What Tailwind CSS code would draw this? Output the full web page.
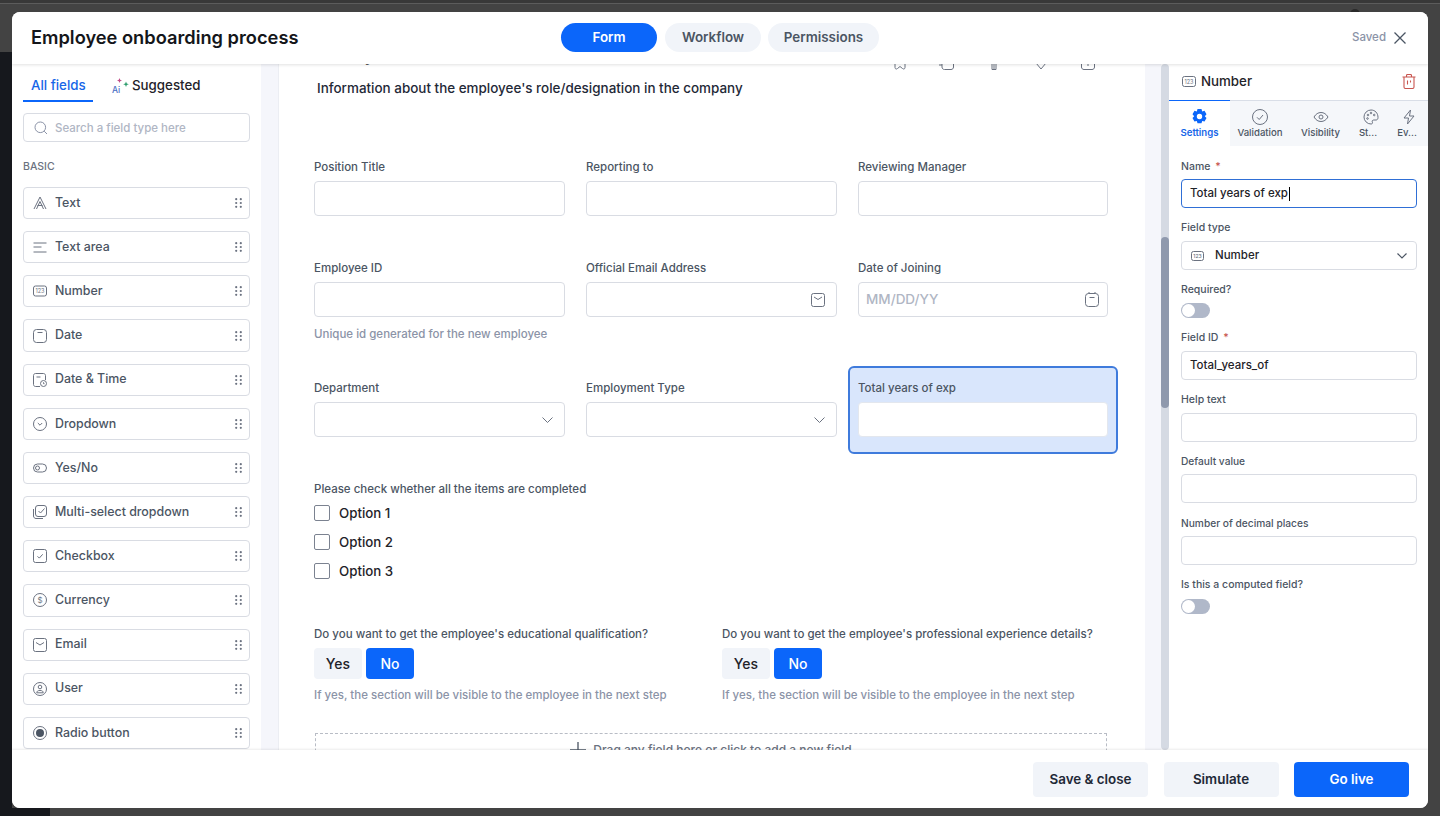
<!DOCTYPE html>
<html lang="en">
<head>
  <meta charset="UTF-8">
  <meta name="viewport" content="width=device-width, initial-scale=1.0">
  <title>Employee onboarding process</title>
  <script src="https://cdn.jsdelivr.net/npm/@tailwindcss/browser@4"></script>
</head>
<body class="relative h-[816px] w-[1440px] overflow-hidden bg-[#434343] p-3 font-['Inter',sans-serif] text-[#1f2329]">
  <!-- page behind the modal -->
  <div class="absolute left-0 right-0 top-0 h-[4px] border-b border-[#5c5c5c] bg-[#383838]"></div>
  <div class="absolute bottom-0 left-0 top-[52px] w-[12px] bg-[#16181d]"></div>
  <div class="absolute bottom-0 left-0 h-[8px] w-[50px] bg-[#16181d]"></div>
  <div class="absolute left-[1350px] top-[9px] h-[10px] w-[10px] rounded-full bg-[#2a2a2a]"></div>

  <div class="relative flex h-[796px] w-[1416px] flex-col overflow-hidden rounded-[8px] bg-white">
    <!-- Header -->
    <header class="relative z-10 flex h-[52px] shrink-0 items-center bg-white pl-[19px] pr-[22px] shadow-[0_1px_3px_rgba(0,0,0,0.12)]">
      <h1 class="w-[530px] whitespace-nowrap text-[18.25px] font-semibold text-[#14161a]">Employee onboarding process</h1>
      <nav class="mb-[2px] flex h-[29px] items-stretch text-[13.4px] font-semibold">
        <span class="flex w-[96px] items-center justify-center rounded-full bg-[#0b66fa] text-white">Form</span>
        <span class="ml-2 flex w-[96px] items-center justify-center rounded-full bg-[#f1f4f9] text-[#4b5563]">Workflow</span>
        <span class="ml-[7px] flex w-[111px] items-center justify-center rounded-full bg-[#f1f4f9] text-[#4b5563]">Permissions</span>
      </nav>
      <span class="ml-auto text-[11.5px] font-medium text-[#8b93a7]">Saved</span>
      <svg class="ml-2 h-[12px] w-[12px]" viewBox="0 0 12 12" fill="none" stroke="#4b5563" stroke-width="1.3"><path d="M.5.500l11 11M11.500.500l-11 11"/></svg>
    </header>

    <div class="flex h-[686px] overflow-hidden">
      <!-- Left panel -->
      <aside class="w-[249px] shrink-0 overflow-hidden bg-white px-[11px]">
        <div class="flex h-[38px] items-start pt-[12px] text-[13.3px] font-medium">
          <div class="h-[26px] w-[70px] border-b-2 border-[#0b66fa] pl-2 text-[#1766e8]">All fields</div>
          <div class="ml-[19px] flex items-center">
            <span class="relative block h-[18px] w-[20px] text-[#4c6fc4]">
              <span class="absolute bottom-0 left-0 text-[8.5px] leading-[10px]">Ai</span>
              <svg class="absolute left-0 top-0 h-[18px] w-[20px]" viewBox="0 0 20 18"><path d="M7.500 1l.7 1.800 1.800.7-1.800.7-.7 1.800-.7-1.800L5 3.500l1.800-.7z" fill="#c24f8a"/><path d="M14 4.500l.8 2 2 .8-2 .8-.8 2-.8-2-2-.8 2-.8z" fill="#2f9e6e"/></svg>
            </span>
            <span class="text-[#1f2329]">Suggested</span>
          </div>
        </div>
        <div class="mt-[11px] flex h-[29px] items-center rounded-[4px] border border-[#d9dce3] pl-[10px]">
          <svg class="h-[14px] w-[14px] shrink-0" viewBox="0 0 14 14" fill="none" stroke="#8b93a7"><circle cx="6.300" cy="6.300" r="5.300"/><path d="M10.200 10.200L13 13"/></svg>
          <input class="ml-[7px] mt-[2px] w-[180px] bg-transparent text-[11.5px] font-medium outline-none placeholder:text-[#b0b6c4]" placeholder="Search a field type here">
        </div>
        <div class="mt-[18px] h-[14px] text-[10.5px] font-medium leading-[14px] text-[#6b7280]">BASIC</div>
        <div id="fieldList" class="mt-[13px] flex flex-col gap-3"></div>
      </aside>

      <div class="w-[17px] shrink-0 bg-[#f5f6fb]"></div>

      <!-- Form canvas -->
      <main class="w-[867px] shrink-0 overflow-hidden border-l border-[#eceef3] bg-white">
        <div class="-mt-[21px] flex h-[27px] items-end justify-between pl-[38px] pr-[49px]">
          <h2 class="self-start text-[16px] font-semibold leading-[24px]">Employment details</h2>
          <div class="flex gap-[31px]">
            <svg class="h-4 w-4" viewBox="0 0 16 16" fill="none" stroke="#6b7280"><path d="M3 9v4.500c0 1.500 1.500 2 2.500 1L8 12.500l2.500 2c1 1 2.500.5 2.500-1V9"/></svg>
            <svg class="h-4 w-4" viewBox="0 0 16 16" fill="none" stroke="#6b7280"><path d="M0 11h3M3 9v4c0 1.500 1 2.500 2.500 2.500H12c1.500 0 2.500-1 2.500-2.500V9"/></svg>
            <svg class="h-4 w-4" viewBox="0 0 16 16" fill="none" stroke="#6b7280"><path d="M6 9v6.500h4V9M8 10v5"/></svg>
            <svg class="h-4 w-4" viewBox="0 0 16 16" fill="none" stroke="#6b7280"><path d="M3 9l5 6 5-6"/></svg>
            <svg class="h-4 w-4" viewBox="0 0 16 16" fill="none" stroke="#6b7280"><path d="M1.500 9v4c0 1.500 1 2.500 2.500 2.500h8c1.500 0 2.500-1 2.500-2.500V9M8 9v3"/></svg>
          </div>
        </div>
        <p class="ml-[38px] mt-2 text-[13.45px] font-medium leading-5 text-[#1f2937]">Information about the employee's role/designation in the company</p>

        <div class="ml-[35px] w-[794px]">
          <div class="mt-[62px] grid grid-cols-[251px_251px_250px] gap-x-[21px]">
            <label class="block"><span class="mb-[7px] block text-[11.5px] font-medium leading-[14px] text-[#4b5563]">Position Title</span><input class="block h-[35px] w-full rounded-[4px] border border-[#d9dce3]"></label>
            <label class="block"><span class="mb-[7px] block text-[11.5px] font-medium leading-[14px] text-[#4b5563]">Reporting to</span><input class="block h-[35px] w-full rounded-[4px] border border-[#d9dce3]"></label>
            <label class="block"><span class="mb-[7px] block text-[11.5px] font-medium leading-[14px] text-[#4b5563]">Reviewing Manager</span><input class="block h-[35px] w-full rounded-[4px] border border-[#d9dce3]"></label>
          </div>

          <div class="mt-[45px] grid grid-cols-[251px_251px_250px] gap-x-[21px]">
            <div>
              <span class="mb-[7px] block text-[11.5px] font-medium leading-[14px] text-[#4b5563]">Employee ID</span>
              <input class="block h-[35px] w-full rounded-[4px] border border-[#d9dce3]">
              <p class="mt-[10px] whitespace-nowrap text-[11.5px] font-medium leading-[14px] text-[#8b93a7]">Unique id generated for the new employee</p>
            </div>
            <div>
              <span class="mb-[7px] block text-[11.5px] font-medium leading-[14px] text-[#4b5563]">Official Email Address</span>
              <div class="flex h-[35px] items-center justify-end rounded-[4px] border border-[#d9dce3] pr-[11px]">
                <svg class="h-[14px] w-[14px]" viewBox="0 0 14 14" fill="none" stroke="#6b7280"><rect x=".5" y=".5" width="13" height="13" rx="2"/><path d="M3 4l4 2.500L11 4"/></svg>
              </div>
            </div>
            <div>
              <span class="mb-[7px] block text-[11.5px] font-medium leading-[14px] text-[#4b5563]">Date of Joining</span>
              <div class="flex h-[35px] items-center justify-between rounded-[4px] border border-[#d9dce3] pl-[7px] pr-2">
                <span class="text-[13.5px] font-medium text-[#b0b6c4]">MM/DD/YY</span>
                <svg class="h-[15px] w-[14px]" viewBox="0 0 14 15" fill="none" stroke="#6b7280"><rect x=".5" y="1.500" width="13" height="13" rx="3"/><path d="M4 0v2M10 0v2M4.500 5.500h5"/></svg>
              </div>
            </div>
          </div>

          <div class="mt-[25px] grid grid-cols-[251px_251px_250px] gap-x-[21px]">
            <div class="pt-[15px]">
              <span class="mb-[7px] block text-[11.5px] font-medium leading-[14px] text-[#4b5563]">Department</span>
              <div class="flex h-[35px] items-center justify-end rounded-[4px] border border-[#d9dce3] pr-[11px]">
                <svg class="h-[6px] w-[11px]" viewBox="0 0 11 6" fill="none" stroke="#6b7280"><path d="M.5.500l5 5 5-5"/></svg>
              </div>
            </div>
            <div class="pt-[15px]">
              <span class="mb-[7px] block text-[11.5px] font-medium leading-[14px] text-[#4b5563]">Employment Type</span>
              <div class="flex h-[35px] items-center justify-end rounded-[4px] border border-[#d9dce3] pr-[11px]">
                <svg class="h-[6px] w-[11px]" viewBox="0 0 11 6" fill="none" stroke="#6b7280"><path d="M.5.500l5 5 5-5"/></svg>
              </div>
            </div>
            <div class="-mx-[10px] h-[88px] rounded-[6px] border-2 border-[#3f7bdc] bg-[#d9e6fc] px-2 pt-[13px]">
              <span class="mb-[7px] block text-[11.5px] font-medium leading-[14px] text-[#4b5563]">Total years of exp</span>
              <input class="block h-[35px] w-full rounded-[4px] border border-[#e3e7ee] bg-white">
            </div>
          </div>

          <p class="mt-[28px] text-[11.5px] font-medium leading-[14px] text-[#4b5563]">Please check whether all the items are completed</p>
          <div class="mt-[7px] flex flex-col gap-[9px] text-[13.3px] font-medium leading-5">
            <label class="flex items-center"><span class="h-4 w-4 rounded-[2px] border-[1.5px] border-[#7b8290]"></span><span class="ml-[9px]">Option 1</span></label>
            <label class="flex items-center"><span class="h-4 w-4 rounded-[2px] border-[1.5px] border-[#7b8290]"></span><span class="ml-[9px]">Option 2</span></label>
            <label class="flex items-center"><span class="h-4 w-4 rounded-[2px] border-[1.5px] border-[#7b8290]"></span><span class="ml-[9px]">Option 3</span></label>
          </div>

          <div class="mt-[46px] grid grid-cols-[408px_1fr]">
            <div>
              <p class="whitespace-nowrap text-[11.5px] font-medium leading-[14px] text-[#4b5563]">Do you want to get the employee's educational qualification?</p>
              <div class="mt-[7px] flex h-[31px] gap-1 text-[14px] font-medium">
                <span class="flex w-[48px] items-center justify-center rounded-[4px] bg-[#f1f4f9]">Yes</span>
                <span class="flex w-[48px] items-center justify-center rounded-[4px] bg-[#0b66fa] text-white">No</span>
              </div>
              <p class="mt-[9px] whitespace-nowrap text-[11.5px] font-medium leading-[14px] text-[#8b93a7]">If yes, the section will be visible to the employee in the next step</p>
            </div>
            <div>
              <p class="whitespace-nowrap text-[11.5px] font-medium leading-[14px] text-[#4b5563]">Do you want to get the employee's professional experience details?</p>
              <div class="mt-[7px] flex h-[31px] gap-1 text-[14px] font-medium">
                <span class="flex w-[48px] items-center justify-center rounded-[4px] bg-[#f1f4f9]">Yes</span>
                <span class="flex w-[48px] items-center justify-center rounded-[4px] bg-[#0b66fa] text-white">No</span>
              </div>
              <p class="mt-[9px] whitespace-nowrap text-[11.5px] font-medium leading-[14px] text-[#8b93a7]">If yes, the section will be visible to the employee in the next step</p>
            </div>
          </div>

          <div class="ml-px mt-[31px] flex h-[60px] w-[792px] justify-center border border-dashed border-[#b8bcc5] pt-[8px]">
            <div class="flex h-[16px] items-center">
              <svg class="h-4 w-4" viewBox="0 0 16 16" fill="none" stroke="#4b5563" stroke-width="1.300"><path d="M8 0v16M0 8h16"/></svg>
              <span class="ml-[7px] text-[12px] font-medium text-[#6b7280]">Drag any field here or click to add a new field</span>
            </div>
          </div>
        </div>
      </main>

      <div class="w-[16px] shrink-0 bg-[#f5f6fb]"></div>

      <!-- Scrollbar -->
      <div class="w-2 shrink-0 rounded-full bg-[#d5dae3] pt-[173px]">
        <div class="h-[171px] rounded-full bg-[#8f99ad]"></div>
      </div>

      <!-- Right panel -->
      <aside class="w-[259px] shrink-0 bg-white">
        <div class="flex h-[36px] items-center justify-between pb-[1px] pl-[13px] pr-[12px]">
          <div class="flex items-center">
            <svg class="h-[11px] w-[14px]" viewBox="0 0 14 11" fill="none"><rect x=".5" y=".5" width="13" height="10" rx="2" stroke="#6b7280"/><text x="7" y="7.500" text-anchor="middle" font-size="5.500" fill="#6b7280" font-family="Inter">123</text></svg>
            <span class="ml-[5px] text-[13.3px] font-medium">Number</span>
          </div>
          <svg class="h-[15px] w-[14px]" viewBox="0 0 14 15" fill="none" stroke="#c8554f" stroke-width="1.100"><path d="M.5 3h13M4.500 3V1.500c0-.6.4-1 1-1h3c.6 0 1 .4 1 1V3M2 3v10c0 .9.6 1.500 1.500 1.500h7c.9 0 1.500-.6 1.500-1.500V3M5.500 6.500v4M8.500 6.500v2"/></svg>
        </div>
        <div class="flex h-[46px] border-t border-[#d9dee7] bg-[#f5f7fa] text-[9.6px] font-medium text-[#4b5563]">
          <div class="-mt-px flex w-[61px] flex-col items-center border-t-[1.5px] border-[#0b66fa] bg-white pt-[7px] font-semibold text-[#1766e8]">
            <svg class="h-[17px] w-[17px]" viewBox="0 0 24 24" fill="#0b66fa"><path fill-rule="evenodd" d="M9.200 1.500h5.600l1 3.300 3.300-.8 2.800 4.900-2.400 2.600 2.400 2.600-2.800 4.900-3.300-.8-1 3.300H9.200l-1-3.300-3.300.8-2.800-4.900 2.400-2.600-2.400-2.600 2.800-4.900 3.300.8zM12 8.200a3.800 3.800 0 1 0 0 7.600 3.800 3.800 0 0 0 0-7.600z"/></svg>
            <span class="mt-px leading-[14px]">Settings</span>
          </div>
          <div class="flex w-[60px] flex-col items-center pt-[8px]">
            <svg class="h-4 w-4" viewBox="0 0 16 16" fill="none" stroke="#6b7280"><circle cx="8" cy="8" r="7.500"/><path d="M5 8.300l2.200 2.200L11 6"/></svg>
            <span class="mt-px leading-[14px]">Validation</span>
          </div>
          <div class="flex w-[61px] flex-col items-center pt-[8px]">
            <svg class="h-4 w-4" viewBox="0 0 16 16" fill="none" stroke="#6b7280"><path d="M1 8c1.800-3 4.200-4.500 7-4.500S13.200 5 15 8c-1.800 3-4.200 4.500-7 4.500S2.800 11 1 8z"/><circle cx="8" cy="8" r="2"/></svg>
            <span class="mt-px leading-[14px]">Visibility</span>
          </div>
          <div class="flex w-[34px] flex-col items-center pt-[8px]">
            <svg class="ml-[5px] h-4 w-4" viewBox="0 0 16 16" fill="none" stroke="#6b7280"><path d="M8 1a7 7 0 0 0 0 14c1.500 0 1.800-1 1.300-2-.5-1.200.3-2 1.500-2H13c1.200 0 2-.9 2-2.500C15 4 12 1 8 1z"/><circle cx="5" cy="6" r=".8"/><circle cx="8" cy="4" r=".8"/><circle cx="11.200" cy="6" r=".8"/><circle cx="4.500" cy="9.500" r=".8"/></svg>
            <span class="mt-px leading-[14px]">St...</span>
          </div>
          <div class="ml-[5px] flex w-[34px] flex-col items-center pt-[8px]">
            <svg class="ml-[3px] h-4 w-4" viewBox="0 0 16 16" fill="none" stroke="#6b7280"><path d="M9.500 1L3 9h4.500l-1 6L13 7H8.500z"/></svg>
            <span class="mt-px leading-[14px]">Ev...</span>
          </div>
        </div>

        <div class="pl-3 pr-[11px] pt-[13px] text-[11.5px] font-medium">
          <div class="h-[14px] text-[10.5px] leading-[16px] text-[#4b5563]">Name <span class="ml-[2px] text-[#c8554f]">*</span></div>
          <div class="mt-[6px] flex h-[29px] items-center rounded-[4px] border border-[#2f6fd6] pl-2 text-[#1f2329]">Total years of exp<span class="ml-px h-[14px] w-px bg-black"></span></div>

          <div class="mt-3 h-[14px] text-[10.5px] leading-[16px] text-[#4b5563]">Field type</div>
          <div class="mt-[7px] flex h-[29px] items-center rounded-[4px] border border-[#d9dce3] pl-[9px] pr-[9px]">
            <svg class="h-[10px] w-[13px]" viewBox="0 0 13 10" fill="none"><rect x=".5" y=".5" width="12" height="9" rx="2" stroke="#6b7280"/><text x="6.500" y="7" text-anchor="middle" font-size="5" fill="#6b7280" font-family="Inter">123</text></svg>
            <span class="ml-[11px]">Number</span>
            <svg class="ml-auto h-[6px] w-[10px]" viewBox="0 0 10 6" fill="none" stroke="#4b5563" stroke-width="1.200"><path d="M.5.500L5 5 9.500.500"/></svg>
          </div>

          <div class="mt-3 h-[14px] text-[10.5px] leading-[16px] text-[#4b5563]">Required?</div>
          <div class="mt-[7px] flex h-[15px] w-[29px] items-center rounded-full bg-[#b0b8c9] pl-px"><span class="h-[13px] w-[13px] rounded-full bg-white"></span></div>

          <div class="mt-3 h-[14px] text-[10.5px] leading-[16px] text-[#4b5563]">Field ID <span class="ml-[2px] text-[#c8554f]">*</span></div>
          <div class="mt-[7px] flex h-[29px] items-center rounded-[4px] border border-[#d9dce3] pl-2">Total_years_of</div>

          <div class="mt-3 h-[14px] text-[10.5px] leading-[16px] text-[#4b5563]">Help text</div>
          <div class="mt-[7px] h-[29px] rounded-[4px] border border-[#d9dce3]"></div>

          <div class="mt-3 h-[14px] text-[10.2px] leading-[14px] text-[#4b5563]">Default value</div>
          <div class="mt-[6px] h-[29px] rounded-[4px] border border-[#d9dce3]"></div>

          <div class="mt-[13px] h-[14px] text-[10.2px] leading-[14px] text-[#4b5563]">Number of decimal places</div>
          <div class="mt-[6px] h-[29px] rounded-[4px] border border-[#d9dce3]"></div>

          <div class="mt-3 h-[14px] text-[10.5px] leading-[16px] text-[#4b5563]">Is this a computed field?</div>
          <div class="mt-2 flex h-[15px] w-[29px] items-center rounded-full bg-[#b0b8c9] pl-px"><span class="h-[13px] w-[13px] rounded-full bg-white"></span></div>
        </div>
      </aside>
    </div>

    <!-- Footer -->
    <footer class="relative z-10 flex h-[58px] shrink-0 items-center justify-end gap-[15.500px] bg-white pr-[19px] text-[13.4px] font-semibold shadow-[0_-1px_2px_rgba(0,0,0,0.08)]">
      <button class="h-[35px] w-[115px] rounded-[4px] bg-[#f1f4f9] text-[#1f2937]">Save &amp; close</button>
      <button class="h-[35px] w-[115px] rounded-[4px] bg-[#f1f4f9] text-[#1f2937]">Simulate</button>
      <button class="h-[35px] w-[115px] rounded-[4px] bg-[#0b66fa] text-white">Go live</button>
    </footer>
  </div>

  <script>
    const grip = '<svg class="ml-auto h-[10px] w-[7px]" viewBox="0 0 7 10" fill="#6b7280"><circle cx="1.200" cy="1.200" r="1.100"/><circle cx="5.800" cy="1.200" r="1.100"/><circle cx="1.200" cy="5" r="1.100"/><circle cx="5.800" cy="5" r="1.100"/><circle cx="1.200" cy="8.800" r="1.100"/><circle cx="5.800" cy="8.800" r="1.100"/></svg>';

    // icon bodies, all on a 14x14 box
    const fields = [
      ['Text', '<path d="M1 13L7 1l6 12M3.500 13L7 5.500 10.500 13M4.500 9.500h5"/>'],
      ['Text area', '<path d="M.5 3h13M.5 7h8M.5 12h13"/>'],
      ['Number', '<rect x=".5" y="2" width="13" height="10" rx="2"/><text x="7" y="9" text-anchor="middle" font-size="5.500" fill="#6b7280" stroke="none" font-family="Inter">123</text>'],
      ['Date', '<rect x=".5" y=".5" width="13" height="13" rx="3"/><path d="M4.500 3.500h5"/>'],
      ['Date &amp; Time', '<path d="M7 13.500H2.500c-1.100 0-2-.9-2-2v-9c0-1.100.9-2 2-2h8c1.100 0 2 .9 2 2V7M3.500 4h4"/><circle cx="10.500" cy="10.500" r="3"/><path d="M10.500 9.300v1.400h1"/>'],
      ['Dropdown', '<circle cx="7" cy="7" r="6.500"/><path d="M4.800 6l2.200 2.200L9.200 6"/>'],
      ['Yes/No', '<rect x=".5" y="3" width="13" height="8" rx="4"/><circle cx="4.500" cy="7" r="2"/>'],
      ['Multi-select dropdown', '<rect x="2.500" y=".5" width="11" height="11" rx="2.500"/><path d="M.5 4v7c0 1.400 1.100 2.500 2.500 2.500h7M5.500 6l2 2 4-4.500"/>'],
      ['Checkbox', '<rect x=".5" y=".5" width="13" height="13" rx="2"/><path d="M4.500 7.300l1.800 1.800 3.400-3.800"/>'],
      ['Currency', '<circle cx="7" cy="7" r="6.500"/><text x="7" y="9.800" text-anchor="middle" font-size="8" fill="#6b7280" stroke="none" font-family="Inter">$</text>'],
      ['Email', '<rect x=".5" y=".5" width="13" height="13" rx="2"/><path d="M3 4.500l4 2.500 4-2.500"/>'],
      ['User', '<circle cx="7" cy="7" r="6.500"/><circle cx="7" cy="5" r="1.800"/><path d="M3.800 10.800c0-1.600 1-2.300 3.200-2.300s3.200.7 3.200 2.300z"/>'],
      ['Radio button', '<circle cx="7" cy="7" r="6.500"/><circle cx="7" cy="7" r="4" fill="#4b5563" stroke="none"/>']
    ];

    const fieldList = document.getElementById('fieldList');
    fields.forEach(([name, icon]) => {
      const row = document.createElement('div');
      row.className = 'flex h-[32.170px] shrink-0 items-center rounded-[4px] border border-[#d9dce3] pl-[9px] pr-[7px]';
      row.innerHTML = `<svg class="h-[14px] w-[14px] shrink-0" viewBox="0 0 14 14" fill="none" stroke="#6b7280">${icon}</svg><span class="ml-[8px] text-[12.4px] font-medium text-[#4b5563]">${name}</span>${grip}`;
      fieldList.appendChild(row);
    });
  </script>
</body>
</html>
